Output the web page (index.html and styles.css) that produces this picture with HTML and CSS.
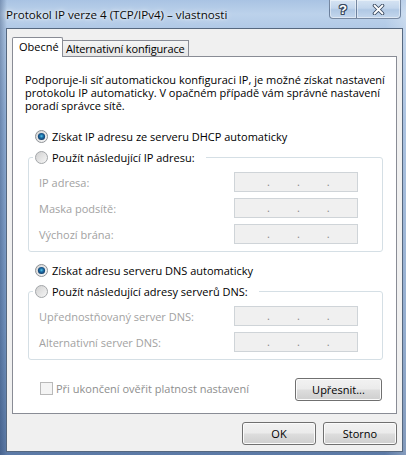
FILE: index.html
```html
<!DOCTYPE html>
<html lang="cs">
<head>
<meta charset="utf-8">
<title>Protokol IP verze 4 (TCP/IPv4) – vlastnosti</title>
<link rel="stylesheet" href="styles.css">
</head>
<body>
<div class="window">
  <div class="titlebar">
    <span class="title">Protokol IP verze 4 (TCP/IPv4) – vlastnosti</span>
    <div class="caption-btns">
      <div class="cbtn help">?</div>
      <div class="cbtn close">
        <svg width="13" height="11" viewBox="0 0 13 11">
          <path d="M2.5 1.5 L10.5 9.5 M10.5 1.5 L2.5 9.5" stroke="#3a4a60" stroke-width="3.6" stroke-linecap="round"/>
          <path d="M2.5 1.5 L10.5 9.5 M10.5 1.5 L2.5 9.5" stroke="#ffffff" stroke-width="1.8" stroke-linecap="round"/>
        </svg>
      </div>
    </div>
  </div>
  <div class="client">
    <div class="tabs">
      <div class="tab active">Obecné</div>
      <div class="tab">Alternativní konfigurace</div>
    </div>
    <div class="panel">
      <p class="intro">Podporuje-li síť automatickou konfiguraci IP, je možné získat nastavení protokolu IP automaticky. V opačném případě vám správné nastavení poradí správce sítě.</p>

      <div class="radio-row">
        <svg class="radio" width="13" height="13" viewBox="0 0 13 13">
          <defs>
            <linearGradient id="rf1" x1="0" y1="0" x2="1" y2="1"><stop offset="0" stop-color="#d2d2d2"/><stop offset="1" stop-color="#fbfbfb"/></linearGradient>
            <radialGradient id="rd1" cx="0.5" cy="0.45" r="0.6"><stop offset="0" stop-color="#55c8e8"/><stop offset="0.4" stop-color="#1f6fa8"/><stop offset="1" stop-color="#0c2e58"/></radialGradient>
          </defs>
          <circle cx="6.5" cy="6.5" r="6" fill="url(#rf1)" stroke="#8e9296"/>
          <circle cx="6.5" cy="6.5" r="3.6" fill="url(#rd1)"/>
        </svg>
        <span>Získat IP adresu ze serveru DHCP automaticky</span>
      </div>

      <fieldset class="group">
        <legend>
          <svg class="radio" width="13" height="13" viewBox="0 0 13 13">
            <defs><linearGradient id="rf2" x1="0" y1="0" x2="1" y2="1"><stop offset="0" stop-color="#cfcfcf"/><stop offset="1" stop-color="#f8f8f8"/></linearGradient></defs>
            <circle cx="6.5" cy="6.5" r="6" fill="url(#rf2)" stroke="#a3a6a9"/>
          </svg>
          <span>Použít následující IP adresu:</span>
        </legend>
        <div class="field-row"><span class="lbl">IP adresa:</span><span class="ip"><i></i>.<i></i>.<i></i>.<i></i></span></div>
        <div class="field-row"><span class="lbl">Maska podsítě:</span><span class="ip"><i></i>.<i></i>.<i></i>.<i></i></span></div>
        <div class="field-row"><span class="lbl">Výchozí brána:</span><span class="ip"><i></i>.<i></i>.<i></i>.<i></i></span></div>
      </fieldset>

      <div class="radio-row dns">
        <svg class="radio" width="13" height="13" viewBox="0 0 13 13">
          <defs>
            <linearGradient id="rf3" x1="0" y1="0" x2="1" y2="1"><stop offset="0" stop-color="#d2d2d2"/><stop offset="1" stop-color="#fbfbfb"/></linearGradient>
            <radialGradient id="rd3" cx="0.5" cy="0.45" r="0.6"><stop offset="0" stop-color="#55c8e8"/><stop offset="0.4" stop-color="#1f6fa8"/><stop offset="1" stop-color="#0c2e58"/></radialGradient>
          </defs>
          <circle cx="6.5" cy="6.5" r="6" fill="url(#rf3)" stroke="#8e9296"/>
          <circle cx="6.5" cy="6.5" r="3.6" fill="url(#rd3)"/>
        </svg>
        <span>Získat adresu serveru DNS automaticky</span>
      </div>

      <fieldset class="group">
        <legend>
          <svg class="radio" width="13" height="13" viewBox="0 0 13 13">
            <defs><linearGradient id="rf4" x1="0" y1="0" x2="1" y2="1"><stop offset="0" stop-color="#cfcfcf"/><stop offset="1" stop-color="#f8f8f8"/></linearGradient></defs>
            <circle cx="6.5" cy="6.5" r="6" fill="url(#rf4)" stroke="#a3a6a9"/>
          </svg>
          <span>Použít následující adresy serverů DNS:</span>
        </legend>
        <div class="field-row"><span class="lbl">Upřednostňovaný server DNS:</span><span class="ip"><i></i>.<i></i>.<i></i>.<i></i></span></div>
        <div class="field-row"><span class="lbl">Alternativní server DNS:</span><span class="ip"><i></i>.<i></i>.<i></i>.<i></i></span></div>
      </fieldset>

      <div class="bottom-row">
        <div class="check">
          <span class="box"></span>
          <span class="check-label">Při ukončení ověřit platnost nastavení</span>
        </div>
        <button class="btn adv" type="button">Upřesnit...</button>
      </div>
    </div>
    <div class="dialog-buttons">
      <button class="btn" type="button">OK</button>
      <button class="btn" type="button">Storno</button>
    </div>
  </div>
</div>
</body>
</html>
```

FILE: styles.css
```css
* { box-sizing: border-box; }
html, body { margin: 0; padding: 0; }
body {
  width: 406px;
  height: 455px;
  overflow: hidden;
  font-family: "Open Sans", "Noto Sans", "Liberation Sans", sans-serif;
  font-size: 11px;
  color: #000;
}

.window {
  width: 406px;
  height: 455px;
  display: flex;
  flex-direction: column;
  background:
    linear-gradient(90deg, rgba(30, 55, 95, 0.35) 0, rgba(30, 55, 95, 0) 7px, rgba(255, 255, 255, 0) 385px, rgba(255, 255, 255, 0.25) 406px),
    linear-gradient(180deg, #a9c3e3 0, #bcd2eb 14px, #b1c9e6 28px, #93b1d8 120px, #7394c0 330px, #5c7aa6 455px);
}

.titlebar {
  height: 28px;
  flex: none;
  display: flex;
  align-items: flex-start;
  padding: 0 5px 0 6px;
}

.title {
  line-height: 29px;
  font-size: 11.6px;
  color: #0b0b0b;
  text-shadow: 0 0 6px rgba(255, 255, 255, 0.9), 0 0 3px rgba(255, 255, 255, 0.8);
}

.caption-btns {
  margin-left: auto;
  display: flex;
  height: 19px;
}

.cbtn {
  height: 19px;
  display: flex;
  align-items: center;
  justify-content: center;
  border: 1px solid rgba(45, 65, 95, 0.55);
  border-top: none;
  background: linear-gradient(180deg, #d6e4f3 0, #c3d6ec 45%, #b0c8e4 55%, #c4d7ed 100%);
  box-shadow: inset 0 0 0 1px rgba(255, 255, 255, 0.45);
}

.help {
  width: 27px;
  border-right: none;
  border-radius: 0 0 0 4px;
  font-family: "Liberation Sans", sans-serif;
  font-weight: bold;
  font-size: 13px;
  color: #fff;
  text-shadow: 1px 0 0 #3a4a60, -1px 0 0 #3a4a60, 0 1px 0 #3a4a60, 0 -1px 0 #3a4a60, 1px 1px 0 #3a4a60, -1px -1px 0 #3a4a60, 1px -1px 0 #3a4a60, -1px 1px 0 #3a4a60;
}

.close {
  width: 45px;
  border-radius: 0 0 4px 0;
}

.client {
  flex: 1;
  margin: 0 3px 3px 6px;
  border: 1px solid #56687f;
  background: #f0f0f0;
  padding: 8px 5px 6px 5px;
  display: flex;
  flex-direction: column;
}

.tabs {
  display: flex;
  align-items: flex-end;
  height: 19px;
}

.tab {
  height: 16px;
  padding: 0 5px;
  line-height: 15px;
  border: 1px solid #898c95;
  border-bottom: none;
  background: linear-gradient(180deg, #f4f4f4, #e6e6e6);
  white-space: nowrap;
}

.tab.active {
  position: relative;
  z-index: 1;
  height: 20px;
  margin-bottom: -1px;
  width: 51px;
  padding: 0 0 0 6px;
  line-height: 18px;
  background: #fff;
  border-radius: 2px 2px 0 0;
}

.tab.active + .tab {
  border-left: none;
  padding: 0 3px 0 3px;
  letter-spacing: -0.15px;
}

.panel {
  height: 358px;
  border: 1px solid #898c95;
  background: #fff;
  padding: 16px 0 12px 0;
  display: flex;
  flex-direction: column;
}

.intro {
  margin: 0 10px 0 12px;
  line-height: 13px;
  height: 39px;
}

.radio-row {
  display: flex;
  align-items: center;
  height: 16px;
  margin: 16px 0 0 22px;
  gap: 4px;
}

.radio-row.dns { margin-top: 10px; }

.radio { flex: none; display: block; }

.group {
  margin: 5px 13px 0 15px;
  padding: 0 24px 7px 4px;
  border: 1px solid #d5dfe5;
  border-radius: 3px;
  min-inline-size: 0;
  display: flex;
  flex-direction: column;
  gap: 6px;
}

.group legend {
  display: flex;
  align-items: center;
  gap: 4px;
  height: 16px;
  padding: 0 11px 0 2px;
  margin-bottom: 7px;
}

.field-row {
  display: flex;
  align-items: center;
  justify-content: space-between;
  height: 20px;
  padding-left: 6px;
}

.lbl { color: #a2a2a2; }

.ip {
  width: 124px;
  height: 20px;
  display: flex;
  align-items: flex-end;
  padding: 0 0 2px 5px;
  line-height: 14px;
  border: 1px solid #cfd4d8;
  background: #f0f0f0;
  color: #8a8a8a;
}

.ip i { width: 27px; display: block; }

.bottom-row {
  margin: 18px 14px 0 27px;
  height: 23px;
  display: flex;
  align-items: center;
  justify-content: space-between;
}

.check {
  display: flex;
  align-items: center;
  gap: 3px;
  margin-top: -3px;
}

.box {
  width: 13px;
  height: 13px;
  border: 1px solid #b9b9b9;
  background: #f4f4f4;
}

.check-label { color: #8e8e8e; }

.btn {
  font-family: inherit;
  font-size: 11px;
  color: #000;
  height: 23px;
  padding: 0;
  border: 1px solid #707070;
  border-radius: 3px;
  background: linear-gradient(180deg, #f2f2f2 0, #ebebeb 48%, #dddddd 52%, #cfcfcf 100%);
  box-shadow: inset 0 0 0 1px #fbfbfb;
}

.btn.adv { width: 87px; }

.dialog-buttons {
  margin-top: 8px;
  display: flex;
  justify-content: flex-end;
  gap: 7px;
}

.dialog-buttons .btn { width: 74px; }
```
